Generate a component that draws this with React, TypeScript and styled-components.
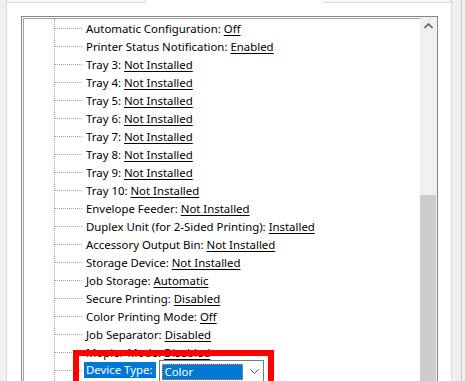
import React from "react";
import styled, { createGlobalStyle } from "styled-components";

const Global = createGlobalStyle`
  html, body { margin: 0; padding: 0; background: #f0f0f0; }
  body { font-family: "Noto Sans", "Segoe UI", sans-serif; }
`;

const Page = styled.div`
  position: relative;
  width: 465px;
  height: 381px;
  overflow: hidden;
  display: flex;
  background: #f0f0f0;
`;

const LeftStrip = styled.div`
  width: 6px;
  flex: none;
`;

const Sheet = styled.div`
  flex: none;
  width: 444px;
  display: flex;
  flex-direction: column;
  background: #ffffff;
  border-left: 1px solid #d9d9d9;
  border-right: 1px solid #d9d9d9;
`;

const RightStrip = styled.div`
  flex: 1;
  display: flex;
  justify-content: flex-end;
  padding-right: 3px;
`;

const RightEdge = styled.div`
  width: 1px;
  background: #c8c8c8;
`;

const TopDecor = styled.div`
  height: 3px;
  display: flex;
  justify-content: space-between;
  margin-bottom: 13px;
`;

const TopTab = styled.div<{ $w: number }>`
  width: ${(p) => p.$w}px;
  height: 2px;
  background: #f7f7f7;
  border-bottom: 1px solid #dcdcdc;
  border-right: 1px solid #dcdcdc;
`;

const ListBox = styled.div`
  margin-left: 14px;
  width: 415px;
  flex: 1;
  display: flex;
  border: 1px solid #828790;
  border-bottom: none;
  box-shadow: inset 1px 1px 0 0 #fff, inset 2px 2px 0 0 #a0a0a0;
  background: #fff;
  overflow: hidden;
`;

const TreeArea = styled.div`
  flex: 1;
  padding-top: 2px;
  padding-left: 32px;
  overflow: hidden;
`;

const Branch = styled.div`
  border-left: 1px dotted #a0a0a0;
  min-height: 400px;
`;

const Row = styled.div`
  height: 18px;
  display: flex;
  align-items: center;
  font-size: 11.4px;
  color: #000;
  white-space: nowrap;
`;

const Connector = styled.span`
  width: 27px;
  flex: none;
  border-top: 1px dotted #a0a0a0;
  margin-top: 1px;
`;

const Label = styled.span`
  margin-left: 4px;
`;

const Value = styled.span`
  text-decoration: underline;
  text-underline-offset: 2px;
`;

const SelLabel = styled.span`
  margin-left: 2px;
  padding: 0 3px 0 2px;
  height: 16px;
  line-height: 16px;
  background: #0078d7;
  color: #fff;
`;

const Combo = styled.div`
  margin-left: 3px;
  margin-top: 3px;
  width: 99px;
  height: 22px;
  border: 1px solid #7a7a7a;
  background: #fff;
  display: flex;
  align-items: center;
  padding: 0 2px;
  box-sizing: content-box;
`;

const ComboValue = styled.div`
  width: 78px;
  height: 16px;
  line-height: 16px;
  padding-left: 3px;
  background: #0078d7;
  color: #fff;
  outline: 1px dotted #e08a2c;
  outline-offset: -1px;
`;

const Chevron = styled.svg`
  margin-left: 7px;
  width: 9px;
  height: 6px;
`;

const ScrollBar = styled.div`
  width: 17px;
  flex: none;
  background: #f0f0f0;
  display: flex;
  flex-direction: column;
`;

const ArrowBtn = styled.div`
  height: 17px;
  display: flex;
  align-items: center;
  justify-content: center;
  margin-bottom: 161px;
`;

const Thumb = styled.div`
  flex: 1;
  margin-right: 1px;
  background: #cdcdcd;
`;

const RedFrame = styled.div`
  position: absolute;
  left: 73px;
  top: 350px;
  width: 189px;
  height: 40px;
  border: 6px solid #ff0000;
  pointer-events: none;
`;

const rows: [string, string][] = [
  ["Automatic Configuration:", "Off"],
  ["Printer Status Notification:", "Enabled"],
  ["Tray 3:", "Not Installed"],
  ["Tray 4:", "Not Installed"],
  ["Tray 5:", "Not Installed"],
  ["Tray 6:", "Not Installed"],
  ["Tray 7:", "Not Installed"],
  ["Tray 8:", "Not Installed"],
  ["Tray 9:", "Not Installed"],
  ["Tray 10:", "Not Installed"],
  ["Envelope Feeder:", "Not Installed"],
  ["Duplex Unit (for 2-Sided Printing):", "Installed"],
  ["Accessory Output Bin:", "Not Installed"],
  ["Storage Device:", "Not Installed"],
  ["Job Storage:", "Automatic"],
  ["Secure Printing:", "Disabled"],
  ["Color Printing Mode:", "Off"],
  ["Job Separator:", "Disabled"],
  ["Mopier Mode:", "Disabled"],
];

export default function App() {
  return (
    <>
      <Global />
      <Page>
        <LeftStrip />
        <Sheet>
          <TopDecor>
            <TopTab $w={138} />
            <TopTab $w={127} />
          </TopDecor>
          <ListBox>
            <TreeArea>
              <Branch>
                {rows.map(([l, v]) => (
                  <Row key={l}>
                    <Connector />
                    <Label>
                      {l} <Value>{v}</Value>
                    </Label>
                  </Row>
                ))}
                <Row>
                  <Connector />
                  <SelLabel>Device Type:</SelLabel>
                  <Combo>
                    <ComboValue>Color</ComboValue>
                    <Chevron viewBox="0 0 9 6">
                      <path d="M0.5 0.5 L4.5 4.5 L8.5 0.5" fill="none" stroke="#505050" strokeWidth="1" />
                    </Chevron>
                  </Combo>
                </Row>
              </Branch>
            </TreeArea>
            <ScrollBar>
              <ArrowBtn>
                <svg width="9" height="6" viewBox="0 0 9 6">
                  <path d="M0.5 5 L4.5 1 L8.5 5" fill="none" stroke="#606060" strokeWidth="1.6" />
                </svg>
              </ArrowBtn>
              <Thumb />
            </ScrollBar>
          </ListBox>
        </Sheet>
        <RightStrip>
          <RightEdge />
        </RightStrip>
        <RedFrame />
      </Page>
    </>
  );
}
